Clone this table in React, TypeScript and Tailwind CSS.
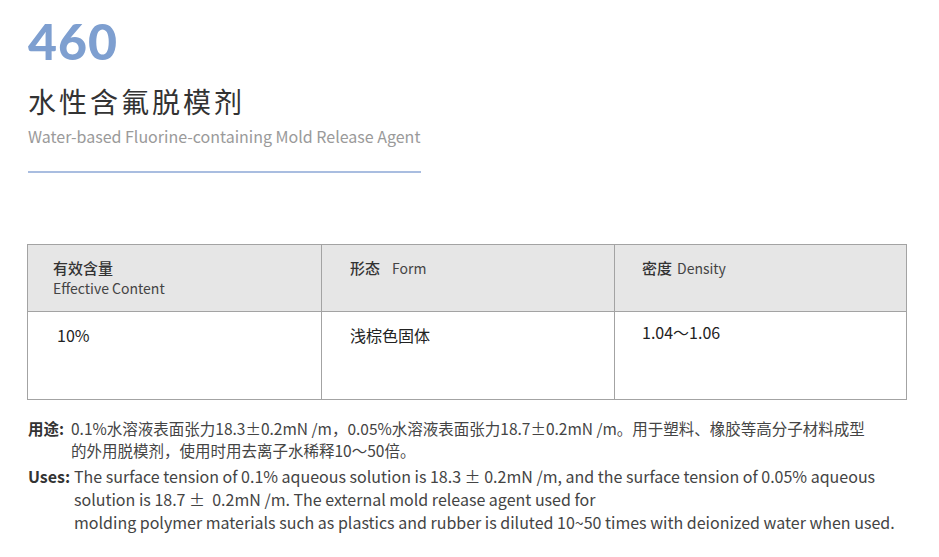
export default function App() {
  const cjk = { fontFamily: '"Noto Sans CJK SC", "Noto Sans", sans-serif' };
  return (
    <div className="min-h-screen w-[939px] bg-white text-[#333]" style={cjk}>
      <div className="pl-[28px] pr-[33px] pt-[12px]">
        {/* Header */}
        <div
          className="text-[50px] font-black leading-[58px] tracking-[1px] text-[#7e9fd0]"
          style={{ fontFamily: 'Lato, "Noto Sans", sans-serif' }}
        >
          460
        </div>
        <h1 className="mt-[15px] text-[28px] font-normal leading-[32px] tracking-[3px] text-[#333]">
          水性含氟脱模剂
        </h1>
        <p className="mt-[8px] text-[16px] leading-[22px] text-[#9a9a9a]">
          Water-based Fluorine-containing Mold Release Agent
        </p>
        <div className="mt-[24px] h-[2px] w-[393px] bg-[#a9bde0]" />

        {/* Table */}
        <div className="ml-[-1px] mt-[71px] w-[880px] border border-[#a3a3a3]">
          <div className="grid grid-cols-[293px_293px_1fr] bg-[#e6e6e6]">
            <div className="h-[66px] pl-[25px] pt-[13px]">
              <div className="text-[15px] font-medium leading-[20px]">有效含量</div>
              <div className="text-[14px] leading-[20px] text-[#444]">Effective Content</div>
            </div>
            <div className="h-[66px] border-l border-[#a3a3a3] pl-[28px] pt-[13px] text-[15px] leading-[20px]">
              <span className="font-medium">形态</span>
              <span className="ml-[12px] text-[14px] text-[#444]">Form</span>
            </div>
            <div className="h-[66px] border-l border-[#a3a3a3] pl-[27px] pt-[13px] text-[15px] leading-[20px]">
              <span className="font-medium">密度</span>
              <span className="ml-[5px] text-[14px] text-[#444]">Density</span>
            </div>
          </div>
          <div className="grid grid-cols-[293px_293px_1fr] border-t border-[#a3a3a3]">
            <div className="h-[87px] pl-[29px] pt-[13px] text-[16px] leading-[20px] text-[#222]">10%</div>
            <div className="h-[87px] border-l border-[#a3a3a3] pl-[28px] pt-[13px] text-[16px] leading-[20px] text-[#222]">
              浅棕色固体
            </div>
            <div className="h-[87px] border-l border-[#a3a3a3] pl-[27px] pt-[10px] text-[16px] leading-[20px] text-[#222]">
              1.04～1.06
            </div>
          </div>
        </div>

        {/* Uses */}
        <div className="mt-[17px] text-[15.5px] text-[#444]">
          <div className="flex leading-[22px]">
            <span className="w-[43px] shrink-0 font-bold text-[#333]">用途:</span>
            <p className="whitespace-nowrap">
              0.1%水溶液表面张力18.3±0.2mN /m，0.05%水溶液表面张力18.7±0.2mN /m。用于塑料、橡胶等高分子材料成型
              <br />
              的外用脱模剂，使用时用去离子水稀释10～50倍。
            </p>
          </div>
          <div className="mt-[4px] flex text-[16px] leading-[23px]">
            <span className="w-[46px] shrink-0 font-bold text-[#333]">Uses:</span>
            <p className="whitespace-nowrap">
              The surface tension of 0.1% aqueous solution is 18.3 ± 0.2mN /m, and the surface tension of 0.05% aqueous
              <br />
              solution is 18.7 ±&nbsp; 0.2mN /m. The external mold release agent used for
              <br />
              molding polymer materials such as plastics and rubber is diluted 10~50 times with deionized water when used.
            </p>
          </div>
        </div>
      </div>
    </div>
  );
}
